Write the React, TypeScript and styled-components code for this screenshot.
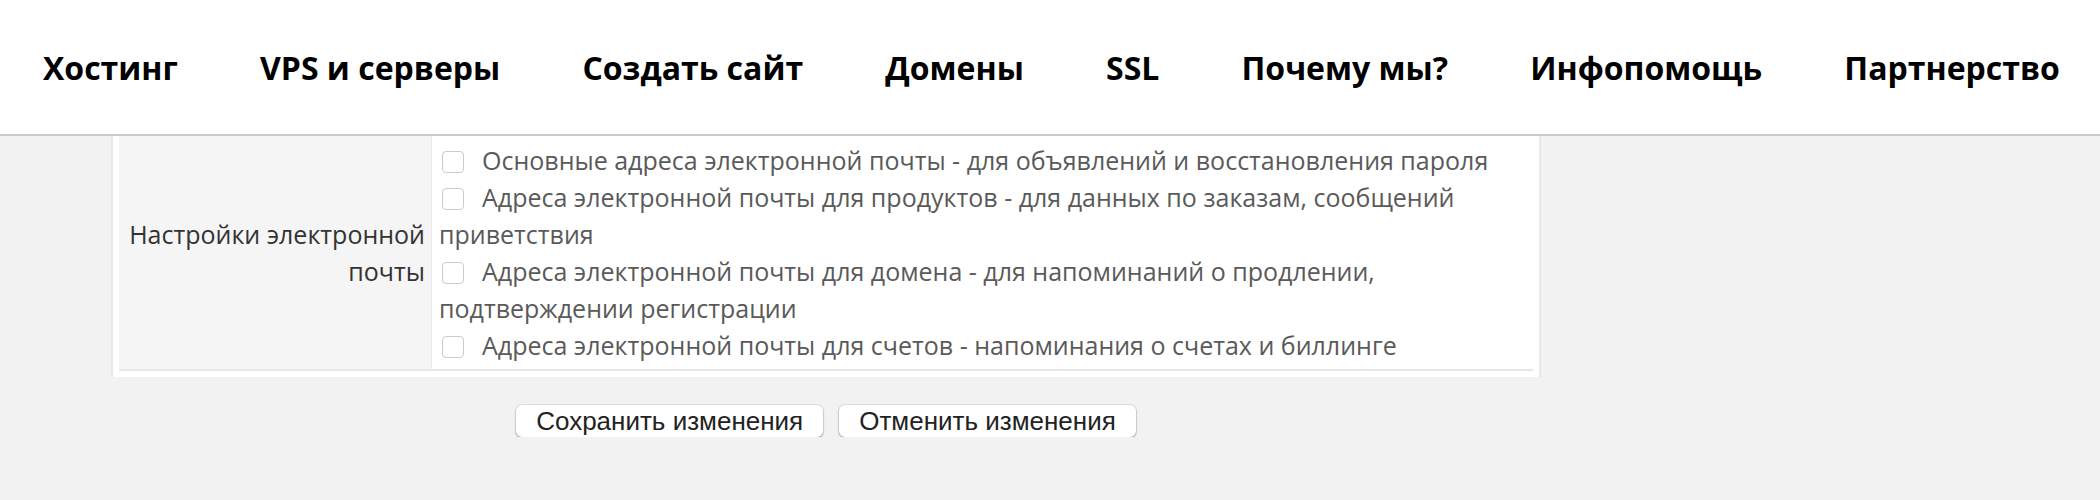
import React from "react";
import { styled, createGlobalStyle } from "styled-components";

const GlobalStyle = createGlobalStyle`
  body {
    margin: 0;
    background: #f2f2f2;
    font-family: "Open Sans", "Noto Sans", sans-serif;
  }
`;

const Header = styled.header`
  height: 134px;
  background: #fff;
  border-bottom: 2px solid #cbcbcb;
  display: flex;
  align-items: center;
  justify-content: space-between;
  padding: 0 40px 0 43px;
`;

const NavLink = styled.a`
  font-family: "Open Sans", sans-serif;
  font-weight: 700;
  font-size: 32px;
  color: #000;
  text-decoration: none;
  white-space: nowrap;
`;

const Panel = styled.div`
  margin-left: 111px;
  width: 1430px;
  box-sizing: border-box;
  background: #fff;
  border-left: 2px solid #e9e9e9;
  border-right: 2px solid #e9e9e9;
  padding: 0 6px 6px;
`;

const Row = styled.div`
  display: grid;
  grid-template-columns: 313px 1fr;
  border-bottom: 2px solid #e6e6e6;
`;

const LabelCell = styled.div`
  background: #f5f5f5;
  border-right: 1px solid #ececec;
  display: flex;
  align-items: center;
  justify-content: flex-end;
  text-align: right;
  padding: 0 6px;
  font-size: 25px;
  line-height: 37px;
  color: #333;
`;

const OptionsCell = styled.div`
  padding: 6px 6px 5px 7px;
  font-size: 25px;
  line-height: 37px;
  color: #5a5a5a;
`;

const Check = styled.input`
  appearance: none;
  width: 22px;
  height: 22px;
  margin: 0 18px 0 3px;
  border: 1px solid #cbcbcb;
  border-radius: 4px;
  background: #fff;
  vertical-align: -3px;
  box-sizing: border-box;
`;

const Actions = styled.div`
  margin: 28px 0 0 111px;
  width: 1430px;
  display: flex;
  justify-content: center;
  gap: 16px;
`;

const Button = styled.button`
  height: 32px;
  padding: 0 20px;
  font-family: "Liberation Sans", Arial, sans-serif;
  font-size: 26px;
  color: #222;
  background: #fff;
  border: none;
  border-radius: 6px;
  box-shadow: 0 0 0 1px rgba(0, 0, 0, 0.07), 0 1px 2px rgba(0, 0, 0, 0.35);
`;

const navItems = [
  "Хостинг",
  "VPS и серверы",
  "Создать сайт",
  "Домены",
  "SSL",
  "Почему мы?",
  "Инфопомощь",
  "Партнерство",
];

const options = [
  "Основные адреса электронной почты - для объявлений и восстановления пароля",
  "Адреса электронной почты для продуктов - для данных по заказам, сообщений приветствия",
  "Адреса электронной почты для домена - для напоминаний о продлении, подтверждении регистрации",
  "Адреса электронной почты для счетов - напоминания о счетах и биллинге",
];

function App() {
  return (
    <>
      <GlobalStyle />
      <Header>
        {navItems.map((item) => (
          <NavLink href="#" key={item}>
            {item}
          </NavLink>
        ))}
      </Header>
      <Panel>
        <Row>
          <LabelCell>
            Настройки электронной
            <br />
            почты
          </LabelCell>
          <OptionsCell>
            {options.map((text, i) => (
              <React.Fragment key={text}>
                <label>
                  <Check type="checkbox" />
                  {text}
                </label>
                {i < options.length - 1 && <br />}
              </React.Fragment>
            ))}
          </OptionsCell>
        </Row>
      </Panel>
      <Actions>
        <Button>Сохранить изменения</Button>
        <Button>Отменить изменения</Button>
      </Actions>
    </>
  );
}

export default App;
